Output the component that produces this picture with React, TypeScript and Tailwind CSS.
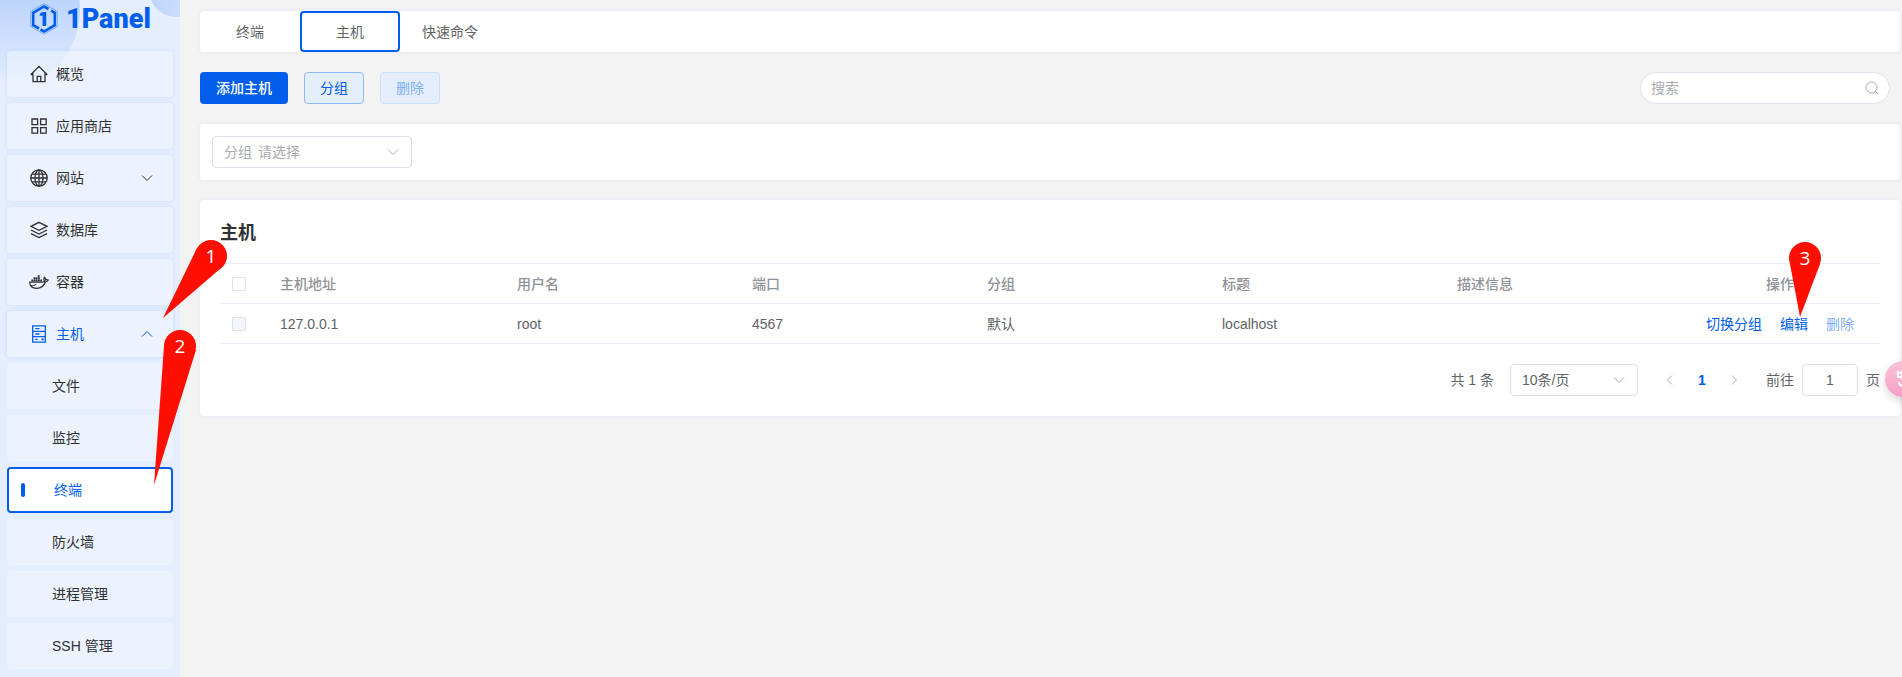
import type { ReactNode } from "react";

const HOSTS = [
  { addr: "127.0.0.1", user: "root", port: "4567", group: "默认", title: "localhost", description: "" },
];

const COLUMNS = ["用户名", "端口", "分组", "标题", "描述信息"];

const SUB_MENU = ["文件", "监控", "终端", "防火墙", "进程管理", "SSH 管理"];

function Icon({ children }: { children: ReactNode }) {
  return (
    <svg
      viewBox="0 0 18 18"
      className="size-[18px] shrink-0"
      fill="none"
      stroke="currentColor"
      strokeWidth="1.3"
      aria-hidden="true"
    >
      {children}
    </svg>
  );
}

function HomeIcon() {
  return (
    <Icon>
      <path d="M.7 9.7 9 1.4l8.3 8.3M3 8.2v8.5h12V8.2M1.2 9.6H3M15 9.6h1.8M7.2 16.5v-5.2h3.6v5.2" />
    </Icon>
  );
}

function GridIcon() {
  return (
    <Icon>
      <path d="M2 2h5.6v5.6H2zM10.6 2h5.6v5.6h-5.6zM2 10.6h5.6v5.6H2zM10.6 10.6h5.6v5.6h-5.6z" />
    </Icon>
  );
}

function GlobeIcon() {
  return (
    <Icon>
      <circle cx="9" cy="9" r="8.2" />
      <ellipse cx="9" cy="9" rx="4" ry="8.2" />
      <path d="M9 .8v16.4M.8 9h16.4M2 5.2h14M2 12.8h14" />
    </Icon>
  );
}

function LayersIcon() {
  return (
    <Icon>
      <path d="m9 1.3 8 4-8 4-8-4zM1 9l8 4 8-4M1 12.6l8 4 8-4" />
    </Icon>
  );
}

function DockerIcon() {
  return (
    <svg viewBox="0 0 20 18" className="-mx-px h-[18px] w-5 shrink-0" fill="none" stroke="currentColor" aria-hidden="true">
      <path
        strokeWidth="1.3"
        d="M.8 9.2h12.6c1.2 0 2-.6 2-1.6-.8-1-.7-2.3 0-3.2 1 .6 1.4 1.4 1.4 2.4.8-.2 1.7-.1 2.4.3-.4 1.1-1.4 1.7-2.8 1.7-1.3 4.2-4.3 6.6-8.9 6.6C3 15.4.8 13.2.8 9.2z"
      />
      <path strokeWidth="1.9" strokeDasharray="1.8 .4" d="M2.4 7.5h10.8M4.6 5.3h6.4M8.8 3.1h2.2" />
      <path strokeWidth="1" d="M2 12.6c2 .3 3.6-.1 5-1.2" />
    </svg>
  );
}

function ServerIcon() {
  return (
    <Icon>
      <path d="M2.7.8h12.6v16.4H2.7zM2.7 6.3h12.6M2.7 11.7h12.6M5.3 3.6h4.2M5.3 9h4.2M5.3 14.4h2.4" />
      <circle cx="12.6" cy="14.4" r=".5" />
    </Icon>
  );
}

function Chevron({ d = "m1 3.5 5 5 5-5" }: { d?: string }) {
  return (
    <svg viewBox="0 0 12 12" className="size-3 shrink-0" fill="none" stroke="currentColor" aria-hidden="true">
      <path d={d} />
    </svg>
  );
}

function Logo() {
  return (
    <a href="#" className="mb-3.5 flex h-[37px] items-center gap-2 pl-[23px] text-[#005eeb]">
      <svg viewBox="0 0 28 32" className="h-8 w-7 shrink-0" fill="none" stroke="currentColor" aria-hidden="true">
        <path d="m14 .8 13.2 7.6v15.2L14 31.2.8 23.6V8.4z" strokeWidth="1" opacity=".4" />
        <path d="M18.500 6 14 3.500 3.200 9.800v12.400l5.800 3.300M21 7.600l3.800 2.200v12.400L14 28.500l-3.500-2" strokeWidth="2.6" />
        <path d="M9.800 10.500 12.800 9h3.400v14h-3.600V12.700H9.800z" fill="currentColor" stroke="none" />
      </svg>
      <span className="font-[Roboto,sans-serif] text-[27px] leading-8 font-black">1Panel</span>
    </a>
  );
}

function MenuItem({ icon, label, chevron }: { icon: ReactNode; label: string; chevron?: boolean }) {
  return (
    <a
      href="#"
      className="flex h-[46px] items-center gap-2 rounded bg-white/30 pr-5 pl-[23px] shadow-[0_0_4px_rgba(0,94,235,0.1)]"
    >
      {icon}
      <span className="flex-1">{label}</span>
      {chevron && <Chevron />}
    </a>
  );
}

function Sidebar() {
  return (
    <aside className="relative w-45 shrink-0 overflow-hidden bg-[#e4eeff] text-[#303133]">
      <div className="absolute -top-[72px] -left-[84px] size-[164px] rounded-full bg-linear-to-b from-[#b9d2fb] from-40% to-[#e4eeff]/20 to-95%" />
      <div className="absolute -top-[38px] left-[149px] size-[55px] rounded-full bg-linear-to-r from-[#bdd5fb] to-[#d3e3fc]" />
      <nav className="relative px-[7px]">
        <Logo />
        <div className="flex flex-col gap-1.5">
          <MenuItem icon={<HomeIcon />} label="概览" />
          <MenuItem icon={<GridIcon />} label="应用商店" />
          <MenuItem icon={<GlobeIcon />} label="网站" chevron />
          <MenuItem icon={<LayersIcon />} label="数据库" />
          <MenuItem icon={<DockerIcon />} label="容器" />
          <button
            type="button"
            aria-expanded="true"
            className="flex h-[46px] items-center gap-2 rounded bg-white/30 pr-5 pl-[23px] text-left text-[#005eeb] shadow-[0_0_4px_rgba(0,94,235,0.15)]"
          >
            <ServerIcon />
            <span className="flex-1">主机</span>
            <Chevron d="m1 8.5 5-5 5 5" />
          </button>
          {SUB_MENU.map((label) =>
            label === "终端" ? (
              <a
                key={label}
                href="#"
                aria-current="page"
                className="flex h-[46px] items-center rounded border-2 border-[#005eeb] bg-white pl-3 text-[#005eeb]"
              >
                <span className="mr-[29px] h-3.5 w-1 rounded-sm bg-[#005eeb]" />
                {label}
              </a>
            ) : (
              <a key={label} href="#" className="flex h-[46px] items-center rounded bg-white/30 pl-[45px]">
                {label}
              </a>
            ),
          )}
        </div>
      </nav>
    </aside>
  );
}

function Tabs() {
  return (
    <div role="tablist" className="flex h-[41px] rounded bg-white shadow-[0_0_4px_#e4e8f4]">
      <button type="button" role="tab" className="w-[100px]">
        终端
      </button>
      <button type="button" role="tab" aria-selected="true" className="w-[100px] rounded border-2 border-[#005eeb]">
        主机
      </button>
      <button type="button" role="tab" className="w-[100px]">
        快速命令
      </button>
    </div>
  );
}

function Toolbar() {
  return (
    <div className="flex h-8 gap-4 pr-2.5">
      <button type="button" className="w-[88px] rounded bg-[#005eeb] font-medium text-white">
        添加主机
      </button>
      <button type="button" className="w-[60px] rounded border border-[#8fb8f6] bg-[#e5eefd] text-[#005eeb]">
        分组
      </button>
      <button type="button" disabled className="w-[60px] rounded border border-[#ccdffb] bg-[#e5eefd] text-[#80aef5]">
        删除
      </button>
      <label className="ml-auto flex w-[250px] items-center rounded-full border border-[#e2e4ec] bg-white px-2.5">
        <input
          type="text"
          aria-label="搜索"
          placeholder="搜索"
          className="min-w-0 flex-1 outline-none placeholder:text-[#a8abb2]"
        />
        <svg viewBox="0 0 14 14" className="size-3.5" fill="none" stroke="#a8abb2" aria-hidden="true">
          <circle cx="6.5" cy="6.5" r="5.5" />
          <path d="m10.5 10.5 2.5 2.5" />
        </svg>
      </label>
    </div>
  );
}

function GroupFilter() {
  return (
    <div className="rounded bg-white p-3 shadow-[0_0_4px_#e4e8f4]">
      <label className="flex h-8 w-[200px] items-center gap-1.5 rounded border border-[#dcdfe6] pr-3 pl-[11px] text-[#a8abb2]">
        分组
        <select className="flex-1 appearance-none outline-none">
          <option>请选择</option>
        </select>
        <Chevron />
      </label>
    </div>
  );
}

function HostTable() {
  const checkbox = "block size-3.5 appearance-none rounded-xs border border-[#dcdfe6]";
  return (
    <table className="w-full table-fixed border-t border-[#ebeef5] text-left">
      <thead>
        <tr className="h-10 border-b border-[#ebeef5] text-[#909399]">
          <th className="w-12 pl-3">
            <input type="checkbox" aria-label="全选" className={`${checkbox} bg-white`} />
          </th>
          <th className="w-[237px] px-3 font-medium">主机地址</th>
          {COLUMNS.map((name) => (
            <th key={name} className="px-3 font-medium">
              {name}
            </th>
          ))}
          <th className="w-[200px] text-center font-medium">操作</th>
        </tr>
      </thead>
      <tbody>
        {HOSTS.map((host) => (
          <tr key={host.addr} className="h-10 border-b border-[#ebeef5]">
            <td className="pl-3">
              <input type="checkbox" disabled aria-label={host.addr} className={`${checkbox} bg-[#f2f5fb]`} />
            </td>
            <td className="px-3">{host.addr}</td>
            <td className="px-3">{host.user}</td>
            <td className="px-3">{host.port}</td>
            <td className="px-3">{host.group}</td>
            <td className="px-3">{host.title}</td>
            <td className="px-3">{host.description}</td>
            <td>
              <div className="flex justify-center gap-[18px] text-[#005eeb]">
                <button type="button">切换分组</button>
                <button type="button">编辑</button>
                <button type="button" disabled className="text-[#80aef5]">
                  删除
                </button>
              </div>
            </td>
          </tr>
        ))}
      </tbody>
    </table>
  );
}

function Pagination() {
  return (
    <div className="flex h-8 items-center justify-end gap-4">
      <span>共 1 条</span>
      <div className="flex h-8 w-32 items-center rounded border border-[#dcdfe6] pr-3 pl-[11px]">
        <select aria-label="每页条数" className="flex-1 appearance-none outline-none">
          <option>10条/页</option>
        </select>
        <span className="text-[#a8abb2]">
          <Chevron />
        </span>
      </div>
      <div className="flex h-8 text-[#a8abb2]">
        <button type="button" disabled aria-label="上一页" className="flex w-8 items-center justify-center">
          <Chevron d="M8 1.5 3.5 6 8 10.5" />
        </button>
        <button type="button" className="w-8 font-bold text-[#005eeb]">
          1
        </button>
        <button type="button" disabled aria-label="下一页" className="flex w-8 items-center justify-center">
          <Chevron d="M4 1.5 8.5 6 4 10.5" />
        </button>
      </div>
      <label className="flex items-center gap-2">
        前往
        <input
          type="text"
          defaultValue="1"
          className="h-8 w-14 rounded border border-[#dcdfe6] text-center outline-none"
        />
        页
      </label>
    </div>
  );
}

function Pin({ n, d, x, className }: { n: number; d: string; x: number; className: string }) {
  return (
    <svg className={`pointer-events-none absolute overflow-visible ${className}`} aria-hidden="true">
      <path d={d} fill="#ff0f00" />
      <circle cx={x} cy="16" r="16" fill="#ff0f00" />
      <text x={x} y="23" textAnchor="middle" fill="#fff" className="font-['Open_Sans',sans-serif] text-[19px]">
        {n}
      </text>
    </svg>
  );
}

export default function App() {
  return (
    <div className="relative flex min-h-screen overflow-hidden bg-[#f3f3f3] font-['Liberation_Sans','Noto_Sans_CJK_SC',sans-serif] text-sm leading-5 text-[#606266]">
      <Sidebar />
      <main className="min-w-0 flex-1 pt-[11px] pr-0.5 pb-5 pl-5">
        <div className="flex flex-col gap-5">
          <Tabs />
          <Toolbar />
          <GroupFilter />
          <section className="rounded bg-white p-5 shadow-[0_0_4px_#e4e8f4]">
            <h1 className="mb-[17px] text-lg leading-[26px] font-bold text-[#303133]">主机</h1>
            <HostTable />
            <div className="mt-5">
              <Pagination />
            </div>
          </section>
        </div>
      </main>

      <button
        type="button"
        aria-label="助手"
        className="absolute top-[361px] -right-[19px] size-9 rounded-full bg-linear-to-b from-[#fac3da] to-[#f79fc4] shadow-[0_4px_10px_rgba(0,0,0,0.15)]"
      >
        <svg viewBox="0 0 36 36" fill="none" stroke="#fff" strokeWidth="2" aria-hidden="true">
          <path d="M13 10v6h9M13 12h8M17 9v10M14 21c0 3 2 4 5 4" />
        </svg>
      </button>

      <Pin n={1} x={48} d="M34 8 0 78 58 28z" className="top-[240px] left-[163px] h-[78px] w-16" />
      <Pin n={2} x={26} d="M10 16 0 155 42 20z" className="top-[330px] left-[154px] h-[155px] w-[42px]" />
      <Pin n={3} x={16} d="M1 22 11 75 31 22z" className="top-[242px] right-[81px] h-[75px] w-8" />
    </div>
  );
}
